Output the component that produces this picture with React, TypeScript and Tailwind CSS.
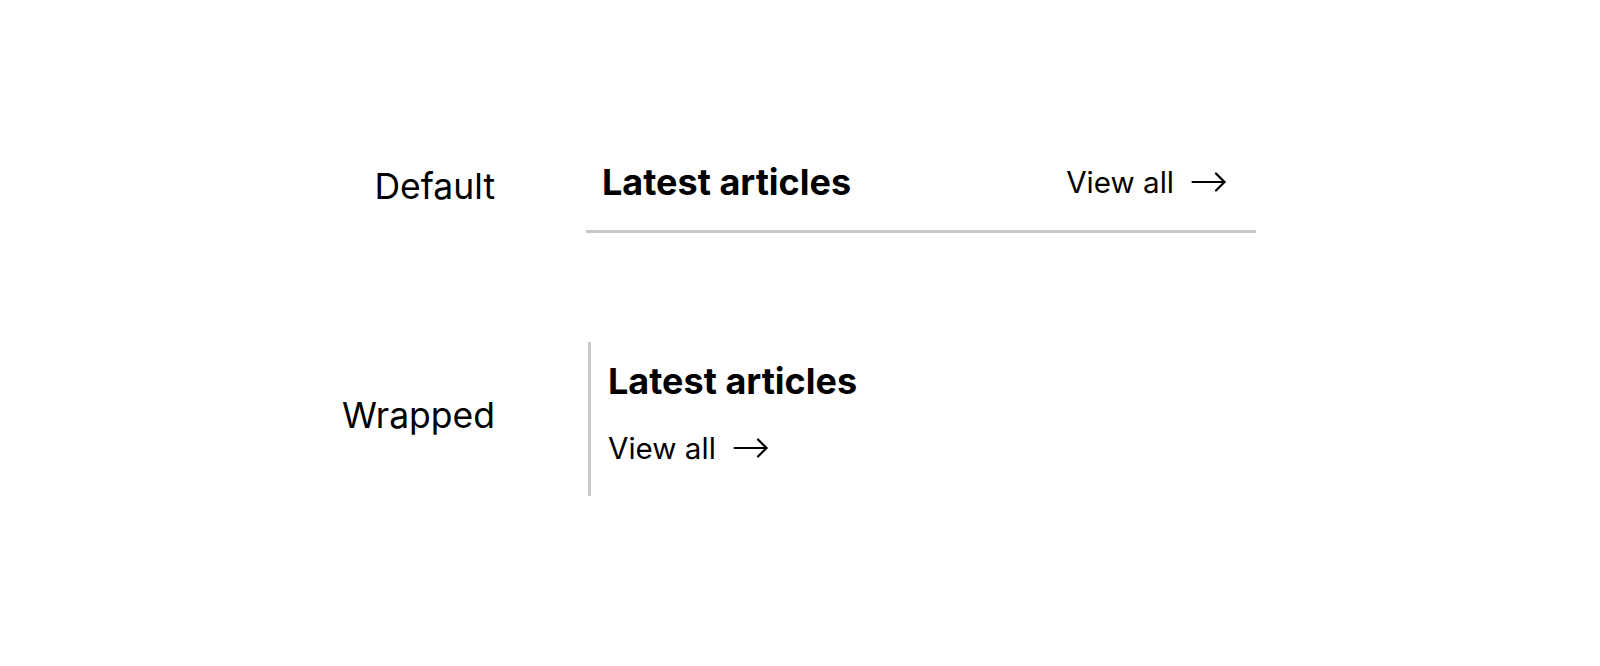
export default function App() {
  const arrow = (
    <svg
      width="35"
      height="20"
      viewBox="0 0 35 20"
      fill="none"
      stroke="currentColor"
      strokeWidth="2.2"
      strokeLinecap="round"
      strokeLinejoin="round"
    >
      <path d="M1.5 10h32" />
      <path d="M25 1.5l8.5 8.5-8.5 8.5" />
    </svg>
  );

  return (
    <div
      className="min-h-screen w-full bg-white text-black flex"
      style={{ fontFamily: "Inter, 'Noto Sans', sans-serif" }}
    >
      <div className="grid grid-cols-[160px_670px] gap-x-[91px] gap-y-[109px] pl-[335px] pt-[134px] items-center h-fit">
        {/* default */}
        <div className="text-right text-[35.5px] leading-[44px] translate-y-[3px]">Default</div>
        <div className="flex items-center justify-between pl-4 pr-[30px] pt-[26px] pb-[26px] border-b-[3px] border-[#c8c8c8]">
          <h2 className="text-[36px] leading-[44px] font-bold">Latest articles</h2>
          <a className="flex items-center gap-[17px] text-[29.6px] leading-[36px]">
            <span>View all</span>
            {arrow}
          </a>
        </div>

        {/* wrapped */}
        <div className="text-right text-[35.5px] leading-[44px] -translate-y-[3px]">Wrapped</div>
        <div className="ml-[2px] border-l-[3px] border-[#c8c8c8] pl-[17px] pt-[17px] pb-[30px] flex flex-col items-start gap-[27px]">
          <h2 className="text-[36px] leading-[44px] font-bold">Latest articles</h2>
          <a className="flex items-center gap-[17px] text-[29.6px] leading-[36px]">
            <span>View all</span>
            {arrow}
          </a>
        </div>
      </div>
    </div>
  );
}
